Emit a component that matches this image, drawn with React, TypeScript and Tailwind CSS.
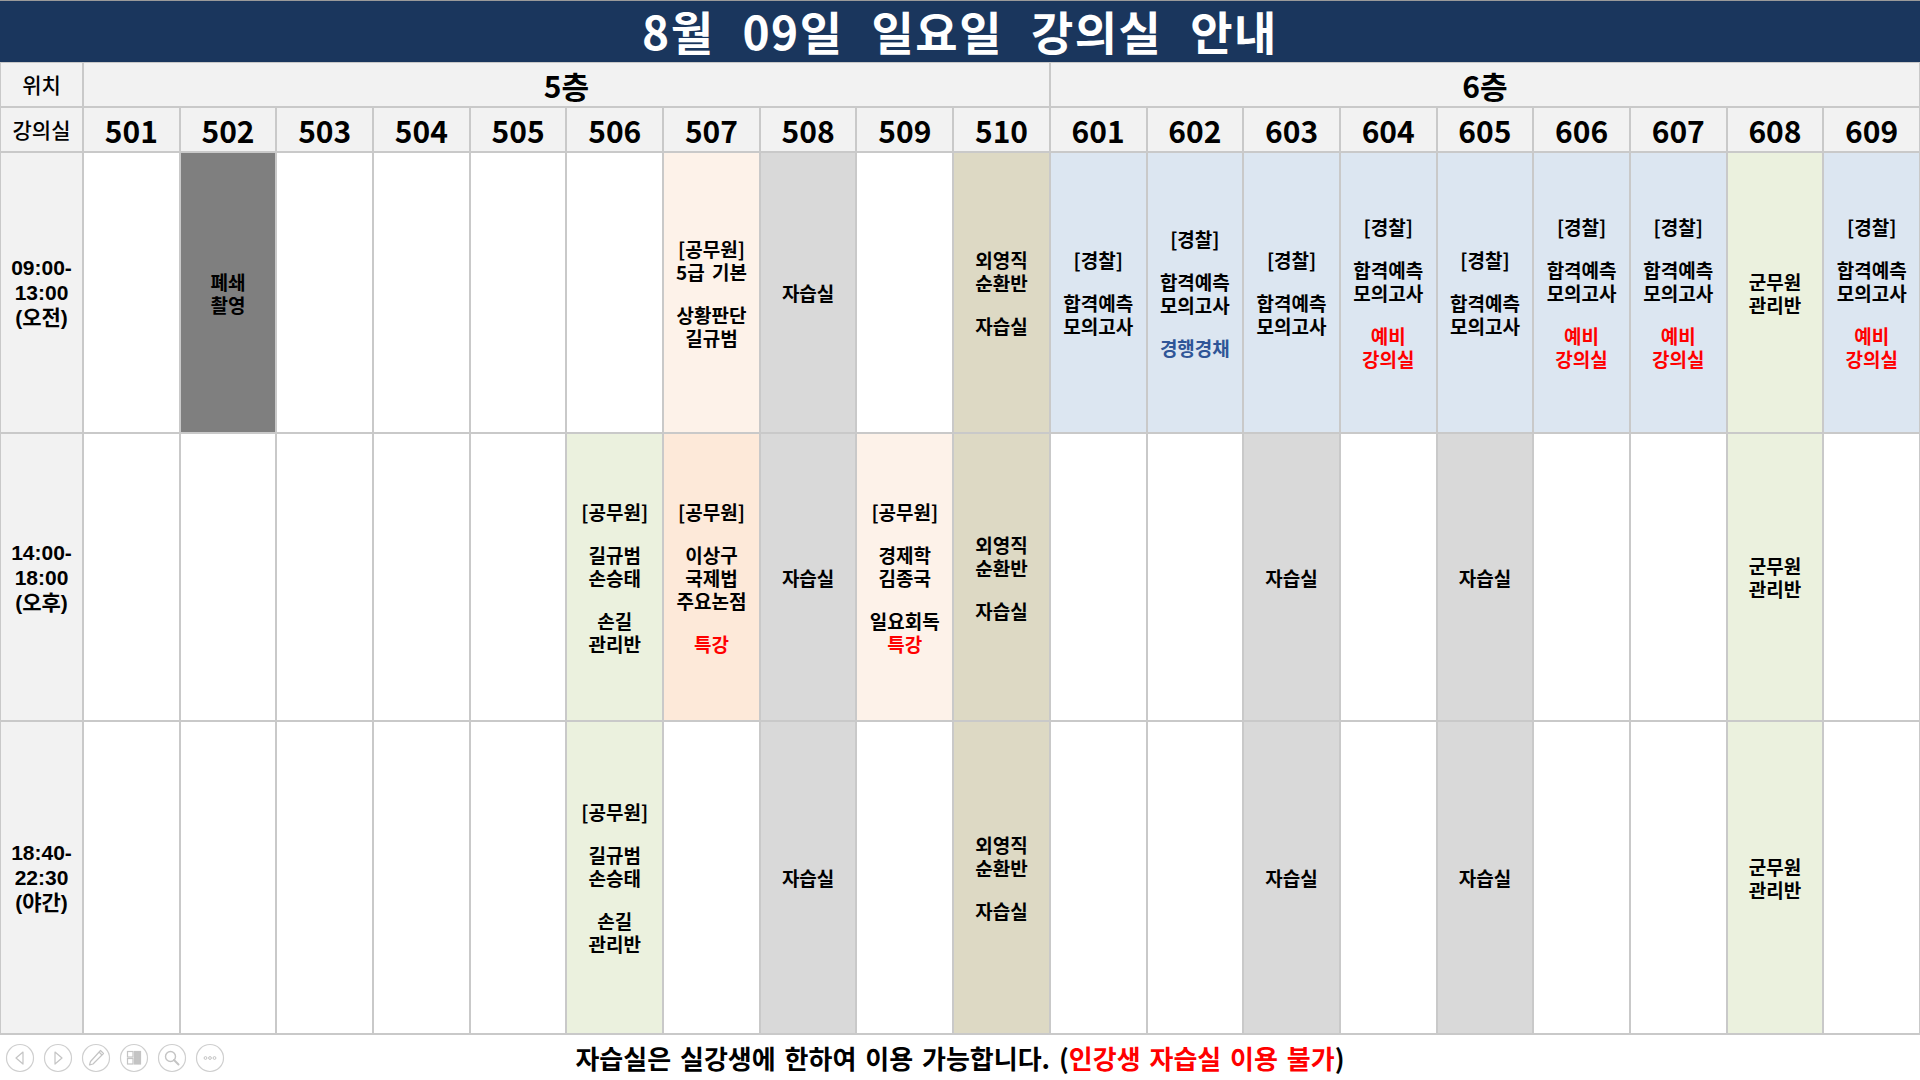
import React from 'react';

type Line = string | null | [string, 'r' | 'b'];
type Cell = { bg: string; lines?: Line[] };

const W = 'bg-white';
const DG = 'bg-[#7f7f7f]';
const PE = 'bg-[#fdf2e9]';
const G = 'bg-[#d9d9d9]';
const T = 'bg-[#ddd9c4]';
const B = 'bg-[#dce6f1]';
const GN = 'bg-[#ebf1de]';
const OR = 'bg-[#fde9d9]';

const police: Line[] = ['[경찰]', null, '합격예측', '모의고사'];
const police602: Line[] = [...police, null, ['경행경채', 'b']];
const policeSpare: Line[] = [...police, null, ['예비', 'r'], ['강의실', 'r']];
const study: Line[] = ['자습실'];
const foreign: Line[] = ['외영직', '순환반', null, '자습실'];
const army: Line[] = ['군무원', '관리반'];
const son: Line[] = ['[공무원]', null, '길규범', '손승태', null, '손길', '관리반'];

const e: Cell = { bg: W };

const morning: Cell[] = [
  e,
  { bg: DG, lines: ['폐쇄', '촬영'] },
  e,
  e,
  e,
  e,
  { bg: PE, lines: ['[공무원]', '5급 기본', null, '상황판단', '길규범'] },
  { bg: G, lines: study },
  e,
  { bg: T, lines: foreign },
  { bg: B, lines: police },
  { bg: B, lines: police602 },
  { bg: B, lines: police },
  { bg: B, lines: policeSpare },
  { bg: B, lines: police },
  { bg: B, lines: policeSpare },
  { bg: B, lines: policeSpare },
  { bg: GN, lines: army },
  { bg: B, lines: policeSpare },
];

const afternoon: Cell[] = [
  e,
  e,
  e,
  e,
  e,
  { bg: GN, lines: son },
  { bg: OR, lines: ['[공무원]', null, '이상구', '국제법', '주요논점', null, ['특강', 'r']] },
  { bg: G, lines: study },
  { bg: PE, lines: ['[공무원]', null, '경제학', '김종국', null, '일요회독', ['특강', 'r']] },
  { bg: T, lines: foreign },
  e,
  e,
  { bg: G, lines: study },
  e,
  { bg: G, lines: study },
  e,
  e,
  { bg: GN, lines: army },
  e,
];

const evening: Cell[] = [
  e,
  e,
  e,
  e,
  e,
  { bg: GN, lines: son },
  e,
  { bg: G, lines: study },
  e,
  { bg: T, lines: foreign },
  e,
  e,
  { bg: G, lines: study },
  e,
  { bg: G, lines: study },
  e,
  e,
  { bg: GN, lines: army },
  e,
];

const rooms = ['501', '502', '503', '504', '505', '506', '507', '508', '509', '510', '601', '602', '603', '604', '605', '606', '607', '608', '609'];

const KR = "font-['Noto_Sans_CJK_KR',sans-serif]";

function CellView({ c }: { c: Cell }) {
  return (
    <div className={`${c.bg} flex flex-col items-center justify-center text-center text-[19px] font-bold leading-[23px] text-black [word-spacing:3px]`}>
      {(c.lines || []).map((l, i) => {
        if (l === null) return <div key={i} className="h-[20px]" />;
        if (typeof l === 'string') return <div key={i} className="whitespace-nowrap">{l}</div>;
        return (
          <div key={i} className={l[1] === 'r' ? 'whitespace-nowrap text-[#ff0000]' : 'whitespace-nowrap text-[#2f5597]'}>
            {l[0]}
          </div>
        );
      })}
    </div>
  );
}

function TimeCell({ a, b, c }: { a: string; b: string; c: string }) {
  return (
    <div className="flex flex-col items-center justify-center bg-[#f2f2f2] text-center font-['Liberation_Sans','Noto_Sans_CJK_KR',sans-serif] text-[21px] font-bold leading-[25px] text-black">
      <div>{a}</div>
      <div>{b}</div>
      <div>{c}</div>
    </div>
  );
}

function Circle({ children }: { children: React.ReactNode }) {
  return (
    <svg width="30" height="30" viewBox="0 0 30 30" className="shrink-0">
      <circle cx="15" cy="15" r="13.5" fill="#ffffff" stroke="#cfcfcf" strokeWidth="1.2" />
      {children}
    </svg>
  );
}

function Controls() {
  const s = '#c4c4c4';
  return (
    <div className="absolute left-[5px] top-1/2 flex -translate-y-1/2 gap-[8px]">
      <Circle>
        <path d="M18 9 L11 15 L18 21 Z" fill="none" stroke={s} strokeWidth="1.2" strokeLinejoin="round" />
      </Circle>
      <Circle>
        <path d="M12 9 L19 15 L12 21 Z" fill="none" stroke={s} strokeWidth="1.2" strokeLinejoin="round" />
      </Circle>
      <Circle>
        <path d="M19.5 7.5 L22.5 10.5 L12 21 L8.5 22 L9.5 18.5 Z" fill="none" stroke={s} strokeWidth="1.2" strokeLinejoin="round" />
        <path d="M18 9 L21 12" stroke={s} strokeWidth="1.2" />
      </Circle>
      <Circle>
        <rect x="8.5" y="8.5" width="5.5" height="5.5" fill="none" stroke={s} strokeWidth="1.2" />
        <rect x="8.5" y="15.5" width="5.5" height="5.5" fill="none" stroke={s} strokeWidth="1.2" />
        <rect x="15.5" y="8.5" width="6" height="12.5" fill={s} stroke={s} strokeWidth="1.2" />
      </Circle>
      <Circle>
        <circle cx="13.5" cy="13.5" r="5" fill="none" stroke={s} strokeWidth="1.4" />
        <path d="M17 17 L21.5 21.5" stroke={s} strokeWidth="2" strokeLinecap="round" />
      </Circle>
      <Circle>
        <circle cx="10.5" cy="15" r="1.4" fill="none" stroke={s} strokeWidth="1" />
        <circle cx="15" cy="15" r="1.4" fill="none" stroke={s} strokeWidth="1" />
        <circle cx="19.5" cy="15" r="1.4" fill="none" stroke={s} strokeWidth="1" />
      </Circle>
    </div>
  );
}

export default function App() {
  return (
    <div className={`flex h-[1080px] w-[1920px] flex-col overflow-hidden bg-white ${KR}`}>
      <div className="flex h-[62px] shrink-0 items-center justify-center border-t border-[#9a9a9a] bg-[#1a365d] pb-[3px]">
        <span className="text-[46px] font-bold leading-none tracking-[1.5px] text-white [word-spacing:16px]">8월 09일 일요일 강의실 안내</span>
      </div>
      <div className="grid h-[973px] shrink-0 grid-cols-[81px_repeat(19,minmax(0,1fr))] grid-rows-[43px_43px_279px_286px_311px] gap-[2px] bg-[#c9c9c9] px-[1px] pt-[1px] pb-[2px]">
        <div className="flex items-center justify-center bg-[#f2f2f2] text-[21px] font-medium text-black">위치</div>
        <div className="col-span-10 flex items-center justify-center bg-[#f2f2f2] text-[30px] font-bold leading-none text-black">5층</div>
        <div className="col-span-9 flex items-center justify-center bg-[#f2f2f2] text-[30px] font-bold leading-none text-black">6층</div>

        <div className="flex items-center justify-center bg-[#f2f2f2] text-[21px] font-medium text-black">강의실</div>
        {rooms.map((r) => (
          <div key={r} className="flex items-center justify-center bg-[#f2f2f2] text-[30px] font-bold leading-none text-black">
            {r}
          </div>
        ))}

        <TimeCell a="09:00-" b="13:00" c="(오전)" />
        {morning.map((c, i) => (
          <CellView key={'m' + i} c={c} />
        ))}

        <TimeCell a="14:00-" b="18:00" c="(오후)" />
        {afternoon.map((c, i) => (
          <CellView key={'a' + i} c={c} />
        ))}

        <TimeCell a="18:40-" b="22:30" c="(야간)" />
        {evening.map((c, i) => (
          <CellView key={'e' + i} c={c} />
        ))}
      </div>
      <div className="relative flex flex-1 items-center justify-center bg-white">
        <Controls />
        <span className="text-[26px] font-bold leading-none text-black [word-spacing:3px]">
          자습실은 실강생에 한하여 이용 가능합니다. (<span className="text-[#ff0000]">인강생 자습실 이용 불가</span>)
        </span>
      </div>
    </div>
  );
}
